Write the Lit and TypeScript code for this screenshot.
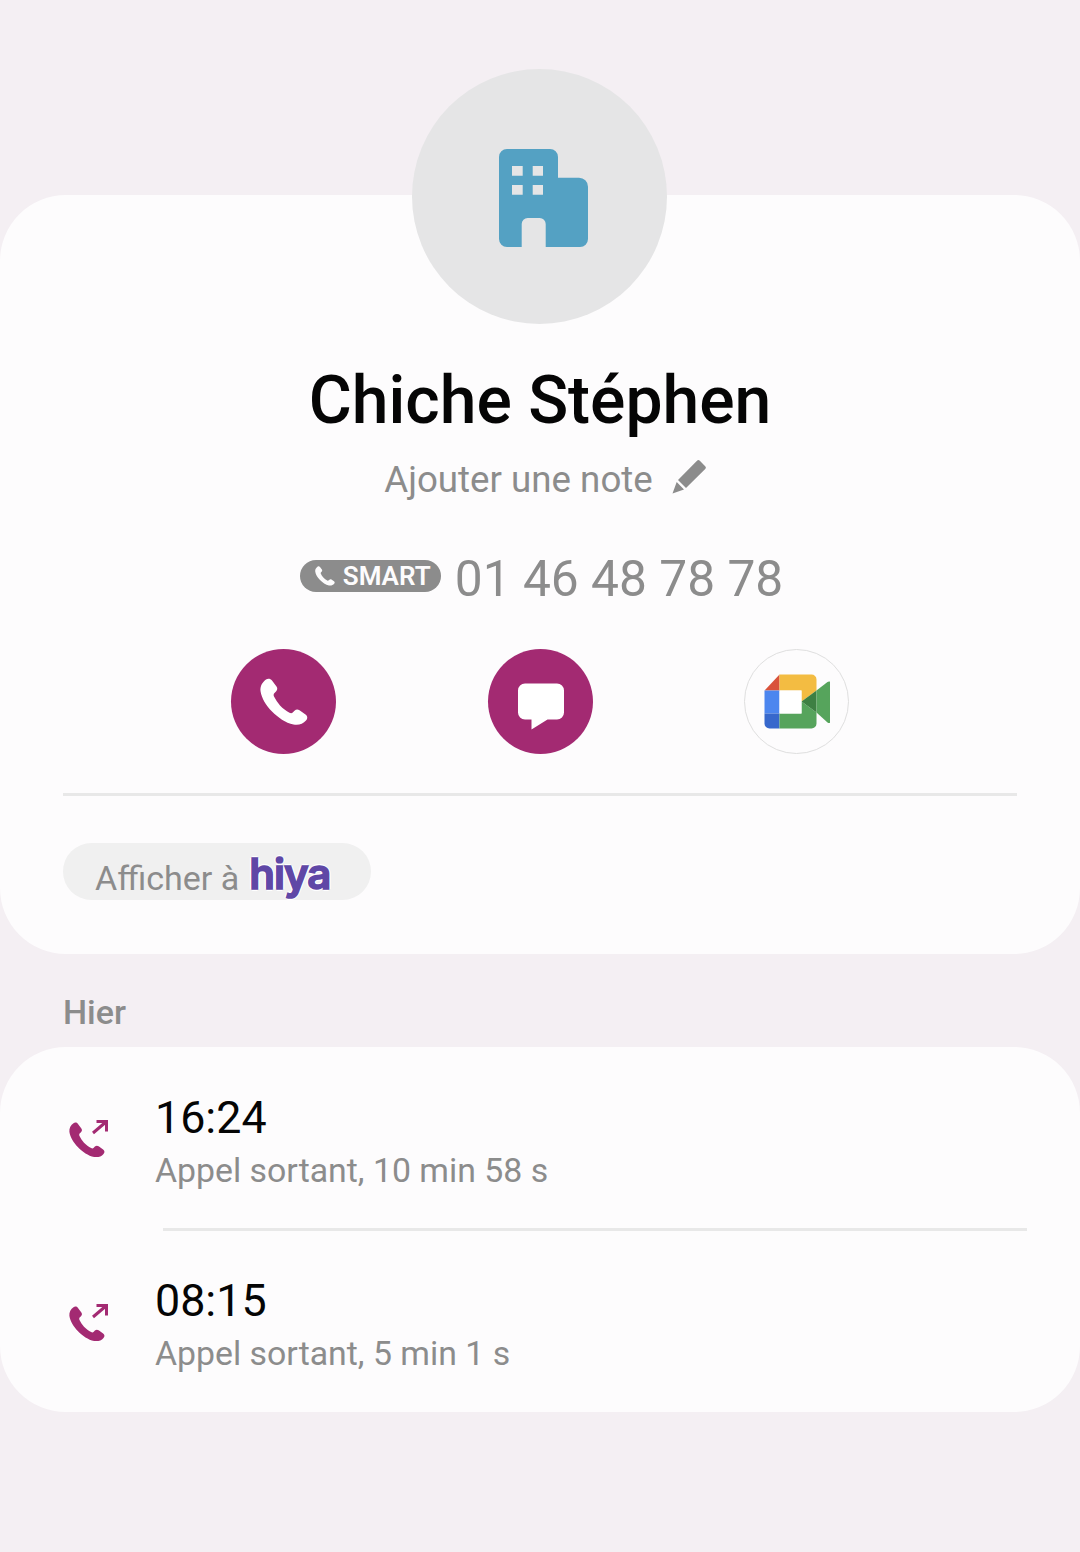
import { LitElement, html, css } from "lit";
import { customElement } from "lit/decorators.js";

const HANDSET = "M6 1.500C8 0 10.500.5 12 2.500L16.500 8.500C17.700 10.200 17.500 12 16 13.500L14.500 15C13.500 16 13.400 17.200 14 18.500C15.500 21.500 17.500 24.500 20 27.500C23 30.500 26 33 29.500 34.800C30.800 35.500 32 35.400 33 34.300L34.500 32.800C36 31.300 37.800 31.100 39.500 32.300L45.500 36.500C47.500 38 48 40.500 46 42.500C43 46 38.500 47.500 33.500 46.500C25.500 45 18 39.500 12 33.500C6 27.500 1.500 20 .5 13C0 8 2.500 4 6 1.500Z";

const outgoing = html`<svg class="call-ic" viewBox="0 0 41 41" aria-hidden="true">
  <path fill="#a32a72" transform="translate(1 3) scale(.75)" d="${HANDSET}"/>
  <path fill="none" stroke="#a32a72" stroke-width="3" d="M25 14 L38.500 2.500 M28.500 2.500 H38.500 V12.500"/>
</svg>`;

@customElement("app-root")
export class AppRoot extends LitElement {
  static styles = css`
    :host { display: block; width: 1080px; height: 1552px; background: #f4eff3; font-family: Roboto, "Liberation Sans", sans-serif; overflow: hidden; }
    .page { display: flex; flex-direction: column; padding-top: 195px; }
    .card { background: #fdfcfd; border-radius: 66px; }
    .main { height: 759px; box-sizing: border-box; padding: 0 63px; display: flex; flex-direction: column; align-items: center; }
    .avatar { width: 255px; height: 255px; border-radius: 50%; background: #e5e5e6; margin: -126px 1px 0 0; flex: none; display: flex; align-items: center; justify-content: center; }
    .avatar svg { width: 90px; height: 98px; margin-left: 9px; margin-top: 3px; }
    .name { margin-top: 37px; font-size: 66px; line-height: 80px; font-weight: 500; color: #050505; }
    .note { margin: 17px 0 0 10px; display: flex; align-items: center; gap: 19px; font-size: 36.7px; line-height: 44px; color: #8c8c8c; }
    .note svg { width: 34px; height: 34px; margin-top: -6px; }
    .phone { margin: 45px 0 0 2px; display: flex; align-items: center; gap: 14px; height: 64px; }
    .smart { width: 141px; height: 32px; box-sizing: border-box; padding-left: 5px; border-radius: 16px; background: #8c8c8c; color: #fdfcfd; font-size: 26px; font-weight: 600; display: flex; align-items: center; justify-content: center; gap: 8px; margin: -6px 0 0 1px; }
    .smart svg { width: 20px; height: 20px; }
    .number { font-size: 49.700px; line-height: 64px; color: #8c8c8c; }
    .actions { margin-top: 38px; width: 100%; display: flex; justify-content: center; gap: 151px; }
    .act { width: 105px; height: 105px; border-radius: 50%; background: #a32a72; display: flex; align-items: center; justify-content: center; flex: none; }
    .act.first { margin-right: 1px; }
    .act.meet { background: #fdfcfd; box-sizing: border-box; border: 1.500px solid #dfdfdf; }
    .act svg { width: 66px; height: 66px; flex: none; }
    .rule { margin-top: 39px; width: 100%; height: 3px; background: #e8e8e8; flex: none; }
    .chip { margin-top: 47px; align-self: flex-start; width: 308px; height: 57px; border-radius: 29px; background: #f0f0f0; box-sizing: border-box; padding-left: 32px; display: flex; align-items: center; gap: 10px; font-size: 34px; color: #8c8c8c; }
    .chip .txt { margin-top: 13px; }
    .hiya { font-family: Inter, Roboto, sans-serif; font-weight: 600; font-size: 42px; line-height: 50px; color: #5f47a6; -webkit-text-stroke: 1.500px #5f47a6; text-shadow: 2px 0 0 #fff, -2px 0 0 #fff, 0 2px 0 #fff, 0 -2px 0 #fff; letter-spacing: -1px; margin-top: 4px; }
    .section { margin: 39px 0 0 63px; height: 54px; font-size: 34px; line-height: 38px; font-weight: 500; color: #8c8c8c; }
    .list { height: 365px; box-sizing: border-box; padding-top: 46px; display: flex; flex-direction: column; }
    .row { display: flex; height: 135px; flex: none; align-items: flex-start; }
    .call-ic { width: 41px; height: 41px; margin: 26px 46px 0 68px; flex: none; }
    .time { font-size: 44.800px; line-height: 50px; color: #050505; }
    .sub { font-size: 33.850px; line-height: 40px; color: #8c8c8c; margin-top: 8px; }
    .sep { margin: 0 53px 0 163px; height: 3px; background: #e8e8e8; flex: none; }
    .row2 { margin-top: 45px; }
    .row2 .call-ic { margin-top: 27px; }
  `;

  render() {
    return html`<div class="page">
      <div class="card main">
        <div class="avatar">
          <svg viewBox="0 0 90 98" aria-hidden="true">
            <path fill="#54a1c3" fill-rule="evenodd" d="M8 0H51a8 8 0 0 1 8 8V28.700H80a9 9 0 0 1 9 9V90a8 8 0 0 1-8 8H46.700V75a6 6 0 0 0-6-6H28.700a6 6 0 0 0-6 6V98H8a8 8 0 0 1-8-8V8a8 8 0 0 1 8-8Z
              M13 17V26.700H23.700V17Z M33.700 17V26.700H44V17Z M13 36V45.700H23.700V36Z M33.700 36V45.700H44V36Z"/>
          </svg>
        </div>
        <div class="name">Chiche Stéphen</div>
        <div class="note">
          <span>Ajouter une note</span>
          <svg viewBox="0 0 34 34" aria-hidden="true"><path fill="#8c8c8c" d="M25 .8a2 2 0 0 1 2.800 0l5.400 5.400a2 2 0 0 1 0 2.800L14 28 6 20Z M4.700 22 12 29.500 .5 33.500Z"/></svg>
        </div>
        <div class="phone">
          <span class="smart">
            <svg viewBox="0 0 48 48" aria-hidden="true"><path fill="#fdfcfd" d="${HANDSET}"/></svg>
            SMART
          </span>
          <span class="number">01 46 48 78 78</span>
        </div>
        <div class="actions">
          <div class="act first">
            <svg viewBox="0 0 66 66" aria-hidden="true"><path fill="#fff" transform="translate(9 9)" d="${HANDSET}"/></svg>
          </div>
          <div class="act">
            <svg viewBox="0 0 66 66" aria-hidden="true"><path fill="#fff" d="M17 14.500H49a7 7 0 0 1 7 7V43.500a7 7 0 0 1-7 7H39.500L23.500 60.500V50.500H17a7 7 0 0 1-7-7V21.500a7 7 0 0 1 7-7Z"/></svg>
          </div>
          <div class="act meet">
            <svg viewBox="763.5 668.5 66 66" aria-hidden="true">
              <path fill="#d9523b" d="M779 674V690H764Z"/>
              <path fill="#f3bc42" d="M779 674H811a5 5 0 0 1 5 5V690L801 701V690H779Z"/>
              <path fill="#4c86ef" d="M764 690H779V713H764Z"/>
              <path fill="#3768cc" d="M764 713H779V728H769a5 5 0 0 1-5-5Z"/>
              <path fill="#56a45c" d="M779 713H801V701L816 712V723a5 5 0 0 1-5 5H779Z"/>
              <path fill="#3e8043" d="M801 701 816 690V712Z"/>
              <path fill="#56a45c" d="M816 690 827 681.500c1.500-1 3-.5 3 1V721c0 1.500-1.500 2-3 1L816 712Z"/>
              <path fill="#fff" d="M779 690H801V713H779Z"/>
            </svg>
          </div>
        </div>
        <div class="rule"></div>
        <div class="chip"><span class="txt">Afficher à</span><span class="hiya">hiya</span></div>
      </div>
      <div class="section">Hier</div>
      <div class="card list">
        <div class="row">
          ${outgoing}
          <div><div class="time">16:24</div><div class="sub">Appel sortant, 10 min 58 s</div></div>
        </div>
        <div class="sep"></div>
        <div class="row row2">
          ${outgoing}
          <div><div class="time">08:15</div><div class="sub">Appel sortant, 5 min 1 s</div></div>
        </div>
      </div>
    </div>`;
  }
}
